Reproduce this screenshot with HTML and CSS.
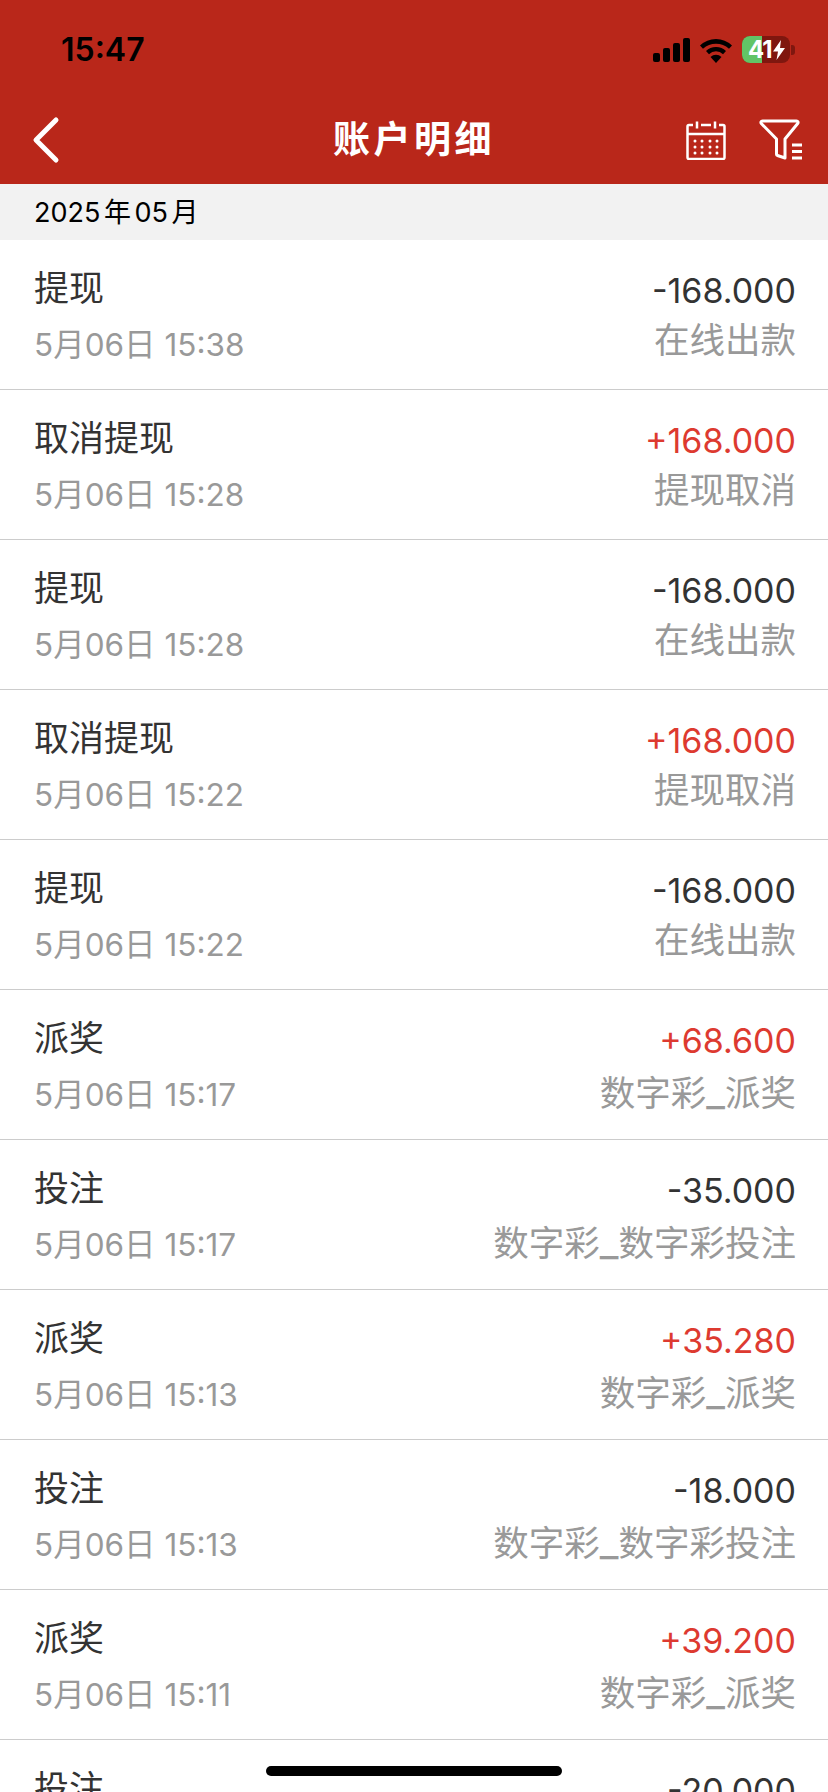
FILE: index.html
```html
<!DOCTYPE html>
<html lang="zh-CN">
<head>
    <meta charset="UTF-8">
    <meta name="viewport" content="width=device-width, initial-scale=1.0">
    <title>账户明细</title>
    <link rel="stylesheet" href="styles.css">
</head>
<body>
    <div class="page">
        <header class="top">
            <div class="status">
                <span class="clock">15:47</span>
                <div class="status-icons">
                    <svg class="signal" width="37" height="24" viewBox="0 0 37 24">
                        <rect x="0" y="15" width="7" height="9" rx="2"/>
                        <rect x="10" y="10" width="7" height="14" rx="2"/>
                        <rect x="20" y="5" width="7" height="19" rx="2"/>
                        <rect x="30" y="0" width="7" height="24" rx="2"/>
                    </svg>
                    <svg class="wifi" width="32" height="25" viewBox="0 0 32 25">
                        <path d="M16 25l-5.500-6a8 8 0 0 1 11 0z"/>
                        <path d="M16 9a14 14 0 0 1 10 4l-3 3.200a10 10 0 0 0-14 0l-3-3.200a14 14 0 0 1 10-4z"/>
                        <path d="M16 1a24 24 0 0 1 16 6.500l-3 3.200a19.500 19.500 0 0 0-26 0l-3-3.200a24 24 0 0 1 16-6.500z"/>
                    </svg>
                    <div class="battery">
                        <div class="battery-body">
                            <div class="battery-fill"></div>
                            <span class="battery-num">41</span>
                            <svg class="bolt" width="12" height="20" viewBox="0 0 12 20">
                                <path d="M8 0L0 11.500h5L3.500 20 12 8H7z"/>
                            </svg>
                        </div>
                        <div class="battery-nub"></div>
                    </div>
                </div>
            </div>
            <nav class="nav">
                <svg class="back" width="30" height="48" viewBox="0 0 30 48">
                    <path d="M26 4L6 24l20 20"/>
                </svg>
                <h1>账户明细</h1>
                <div class="nav-icons">
                    <svg class="calendar" width="40" height="40" viewBox="0 0 40 40">
                        <path d="M7 5H3a1.500 1.500 0 0 0-1.500 1.500v31A1.500 1.500 0 0 0 3 39h34a1.500 1.500 0 0 0 1.500-1.500v-31A1.500 1.500 0 0 0 37 5h-4"/>
                        <path d="M15 5h10"/>
                        <path d="M11 1.500v7M29 1.500v7"/>
                        <path d="M1.500 14h37"/>
                        <path class="dots" d="M9 21h.01M16 21h.01M24 21h.01M31 21h.01M9 27h.01M16 27h.01M24 27h.01M31 27h.01M9 33h.01M16 33h.01M24 33h.01M31 33h.01"/>
                    </svg>
                    <svg class="filter" width="44" height="42" viewBox="0 0 44 42">
                        <path d="M3.500 2h34c1.500 0 2 1.500 1.200 2.500L26 20v19l-7.500-2.500a1.500 1.500 0 0 1-1-1.500V20L2.300 4.500C1.500 3.500 2 2 3.500 2z"/>
                        <path d="M33 26h10M33 32.500h10M33 39h10"/>
                    </svg>
                </div>
            </nav>
        </header>

        <div class="month">2025 年 05 月</div>

        <ul class="list">
            <li class="row">
                <div class="col">
                    <span class="name">提现</span>
                    <span class="time">5月06日 15:38</span>
                </div>
                <div class="col col-right">
                    <span class="amount">-168.000</span>
                    <span class="kind">在线出款</span>
                </div>
            </li>
            <li class="row">
                <div class="col">
                    <span class="name">取消提现</span>
                    <span class="time">5月06日 15:28</span>
                </div>
                <div class="col col-right">
                    <span class="amount plus">+168.000</span>
                    <span class="kind">提现取消</span>
                </div>
            </li>
            <li class="row">
                <div class="col">
                    <span class="name">提现</span>
                    <span class="time">5月06日 15:28</span>
                </div>
                <div class="col col-right">
                    <span class="amount">-168.000</span>
                    <span class="kind">在线出款</span>
                </div>
            </li>
            <li class="row">
                <div class="col">
                    <span class="name">取消提现</span>
                    <span class="time">5月06日 15:22</span>
                </div>
                <div class="col col-right">
                    <span class="amount plus">+168.000</span>
                    <span class="kind">提现取消</span>
                </div>
            </li>
            <li class="row">
                <div class="col">
                    <span class="name">提现</span>
                    <span class="time">5月06日 15:22</span>
                </div>
                <div class="col col-right">
                    <span class="amount">-168.000</span>
                    <span class="kind">在线出款</span>
                </div>
            </li>
            <li class="row">
                <div class="col">
                    <span class="name">派奖</span>
                    <span class="time">5月06日 15:17</span>
                </div>
                <div class="col col-right">
                    <span class="amount plus">+68.600</span>
                    <span class="kind">数字彩<span class="us">_</span>派奖</span>
                </div>
            </li>
            <li class="row">
                <div class="col">
                    <span class="name">投注</span>
                    <span class="time">5月06日 15:17</span>
                </div>
                <div class="col col-right">
                    <span class="amount">-35.000</span>
                    <span class="kind">数字彩<span class="us">_</span>数字彩投注</span>
                </div>
            </li>
            <li class="row">
                <div class="col">
                    <span class="name">派奖</span>
                    <span class="time">5月06日 15:13</span>
                </div>
                <div class="col col-right">
                    <span class="amount plus">+35.280</span>
                    <span class="kind">数字彩<span class="us">_</span>派奖</span>
                </div>
            </li>
            <li class="row">
                <div class="col">
                    <span class="name">投注</span>
                    <span class="time">5月06日 15:13</span>
                </div>
                <div class="col col-right">
                    <span class="amount">-18.000</span>
                    <span class="kind">数字彩<span class="us">_</span>数字彩投注</span>
                </div>
            </li>
            <li class="row">
                <div class="col">
                    <span class="name">派奖</span>
                    <span class="time">5月06日 15:11</span>
                </div>
                <div class="col col-right">
                    <span class="amount plus">+39.200</span>
                    <span class="kind">数字彩<span class="us">_</span>派奖</span>
                </div>
            </li>
            <li class="row">
                <div class="col">
                    <span class="name">投注</span>
                    <span class="time">5月06日 15:11</span>
                </div>
                <div class="col col-right">
                    <span class="amount">-20.000</span>
                    <span class="kind">数字彩<span class="us">_</span>数字彩投注</span>
                </div>
            </li>
        </ul>

        <div class="home-bar"></div>
    </div>
</body>
</html>
```

FILE: styles.css
```css
* {
    box-sizing: border-box;
}

body {
    margin: 0;
    font-family: Inter, "Noto Sans CJK SC", sans-serif;
    background-color: #fff;
}

.page {
    position: relative;
    height: 1792px;
    overflow: hidden;
}

.top {
    height: 184px;
    background-color: #b9271a;
}

.status {
    height: 100px;
    padding: 30px 33px 0 61px;
    display: flex;
    justify-content: space-between;
}

.clock {
    font-size: 32px;
    font-weight: 600;
    line-height: 40px;
    color: #000;
}

.status-icons {
    display: flex;
    align-items: flex-start;
    padding-top: 6px;
}

.signal,
.wifi {
    fill: #000;
    margin-top: 2px;
}

.wifi {
    margin-left: 10px;
}

.battery {
    margin-left: 10px;
    display: flex;
    align-items: center;
}

.battery-body {
    position: relative;
    width: 48px;
    height: 27px;
    border-radius: 8px;
    overflow: hidden;
    background-color: #7f170f;
    display: flex;
    align-items: center;
    padding-left: 6px;
}

.battery-fill {
    position: absolute;
    left: 0;
    top: 0;
    bottom: 0;
    width: 20px;
    background-color: #62c466;
}

.battery-num {
    position: relative;
    font-size: 24px;
    font-weight: 700;
    line-height: 27px;
    letter-spacing: -1px;
    color: #fff;
}

.bolt {
    position: relative;
    fill: #fff;
    margin-left: 1px;
}

.battery-nub {
    width: 4px;
    height: 10px;
    margin-left: 1px;
    border-radius: 0 3px 3px 0;
    background-color: #7f170f;
}

.nav {
    height: 84px;
    padding: 0 25px 4px 30px;
    display: flex;
    align-items: center;
    justify-content: space-between;
    position: relative;
}

.back {
    fill: none;
    stroke: #fff;
    stroke-width: 5;
    stroke-linecap: round;
    stroke-linejoin: round;
}

.nav h1 {
    position: absolute;
    left: 0;
    right: 0;
    top: 15px;
    margin: 0;
    text-align: center;
    font-size: 37px;
    line-height: 50px;
    font-weight: 700;
    letter-spacing: 3.500px;
    color: #fff;
}

.nav-icons {
    display: flex;
    align-items: center;
    gap: 33px;
    position: relative;
}

.calendar,
.filter {
    fill: none;
    stroke: #fff;
    stroke-width: 2.500;
}

.filter {
    stroke-width: 3;
    stroke-linejoin: round;
}

.calendar .dots {
    stroke-width: 3;
    stroke-linecap: round;
}

.month {
    height: 56px;
    padding-left: 34px;
    background-color: #f2f2f2;
    font-size: 27px;
    line-height: 58px;
    word-spacing: -4px;
    color: #000;
}

.list {
    list-style: none;
    margin: 0;
    padding: 0;
}

.row {
    height: 150px;
    padding: 0 32px 0 34px;
    border-bottom: 1px solid #ccc;
    display: flex;
    justify-content: space-between;
}

.col {
    display: flex;
    flex-direction: column;
}

.col-right {
    align-items: flex-end;
}

.name {
    margin-top: 25px;
    font-size: 35px;
    line-height: 46px;
    color: #333;
}

.time {
    margin-top: 13px;
    font-size: 31.500px;
    line-height: 42px;
    color: #999;
}

.amount {
    margin-top: 28px;
    font-size: 34px;
    line-height: 46px;
    color: #333;
}

.amount.plus {
    color: #dd3a30;
}

.kind {
    margin-top: 4px;
    font-size: 35.500px;
    line-height: 46px;
    color: #999;
}

.kind .us {
    font-size: 41px;
}

.home-bar {
    position: absolute;
    left: 266px;
    top: 1766px;
    width: 296px;
    height: 10px;
    border-radius: 5px;
    background-color: #000;
}
```
